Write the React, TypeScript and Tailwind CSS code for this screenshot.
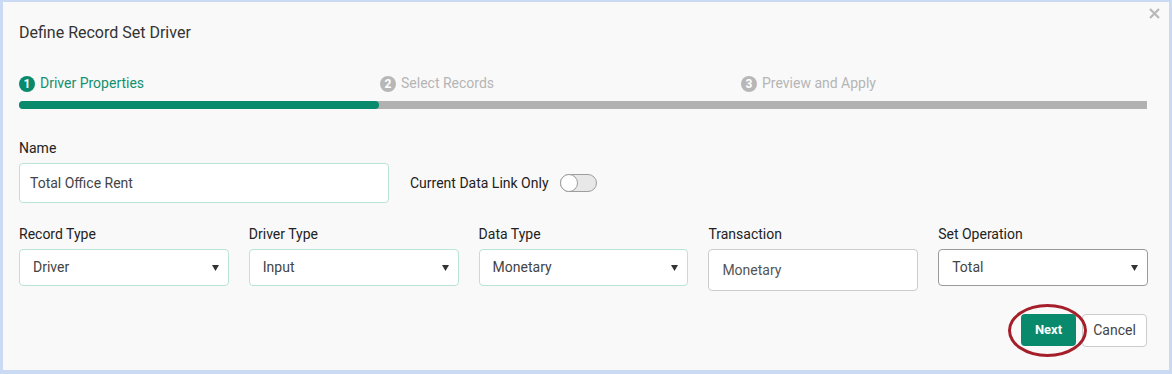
import React from "react";

const font = { fontFamily: "Roboto, 'Noto Sans', Arial, sans-serif" };

function Caret() {
  return (
    <svg width="7" height="7" viewBox="0 0 7 7" className="shrink-0">
      <path d="M0 1 L7 1 L3.5 7 Z" fill="#333" />
    </svg>
  );
}

function Select({ label, value, border }: { label: string; value: string; border: string }) {
  return (
    <div className="flex flex-col">
      <div className="text-[14px] text-[#222] leading-[16px] h-[16px]">{label}</div>
      <div
        className={`mt-[7px] h-[37px] bg-white border ${border} rounded-[4px] flex items-center justify-between pl-[13px] pr-[9px]`}
      >
        <span className="text-[14px] text-[#444]">{value}</span>
        <Caret />
      </div>
    </div>
  );
}

export default function App() {
  return (
    <div
      className="w-[1172px] h-[374px] bg-[#c9daf2] pt-[2px] pl-[3px] pr-[3px] pb-[4px]"
      style={font}
    >
      <div className="relative h-full bg-[#f9f9f9] pl-[16px] pr-[22px] pt-[22px]">
        <svg
          className="absolute right-[9px] top-[6px]"
          width="11"
          height="11"
          viewBox="0 0 11 11"
        >
          <path d="M1 1 L10 10 M10 1 L1 10" stroke="#b8b8b8" strokeWidth="2.2" />
        </svg>
        <div className="text-[16px] text-[#333] leading-[18px]">Define Record Set Driver</div>

        {/* steps */}
        <div className="mt-[31px] flex">
          <div className="w-[361px] flex items-center gap-[5px]">
            <div className="w-[16px] h-[16px] rounded-full bg-[#0a8a6c] text-white text-[12px] font-bold flex items-center justify-center">
              1
            </div>
            <span className="text-[14px] text-[#13906f]">Driver Properties</span>
          </div>
          <div className="w-[361px] flex items-center gap-[5px]">
            <div className="w-[16px] h-[16px] rounded-full bg-[#b7b7b7] text-white text-[12px] font-bold flex items-center justify-center">
              2
            </div>
            <span className="text-[14px] text-[#b5b5b5]">Select Records</span>
          </div>
          <div className="w-[361px] flex items-center gap-[5px]">
            <div className="w-[16px] h-[16px] rounded-full bg-[#b7b7b7] text-white text-[12px] font-bold flex items-center justify-center">
              3
            </div>
            <span className="text-[14px] text-[#b5b5b5]">Preview and Apply</span>
          </div>
        </div>
        <div className="mt-[7px] h-[8px] w-[1128px] bg-[#b1b1b1] rounded-r-[2px] rounded-l-full">
          <div className="h-full w-[360px] bg-[#0a8a6c] rounded-full" />
        </div>

        {/* Name row */}
        <div className="mt-[31px] text-[14px] text-[#222] leading-[16px]">Name</div>
        <div className="mt-[7px] flex items-center">
          <div className="w-[370px] h-[40px] bg-white border border-[#b9e3d7] rounded-[4px] flex items-center pl-[10px]">
            <span className="text-[14px] text-[#444]">Total Office Rent</span>
          </div>
          <span className="ml-[21px] text-[14px] text-[#222]">Current Data Link Only</span>
          <div className="ml-[11px] w-[37px] h-[18px] rounded-full bg-[#e8e8e8] border border-[#9e9e9e] relative">
            <div className="absolute left-[-1px] top-[-1px] w-[18px] h-[18px] rounded-full bg-white border border-[#9e9e9e]" />
          </div>
        </div>

        {/* second row */}
        <div className="mt-[23px] grid grid-cols-5 gap-x-[20px] w-[1129px] items-start">
          <Select label="Record Type" value="Driver" border="border-[#b9e3d7]" />
          <Select label="Driver Type" value="Input" border="border-[#b9e3d7]" />
          <Select label="Data Type" value="Monetary" border="border-[#b9e3d7]" />
          <div className="flex flex-col">
            <div className="text-[14px] text-[#222] leading-[16px] h-[16px]">Transaction</div>
            <div className="mt-[7px] h-[42px] bg-white border border-[#cccccc] rounded-[4px] flex items-center pl-[13px]">
              <span className="text-[14px] text-[#555]">Monetary</span>
            </div>
          </div>
          <Select label="Set Operation" value="Total" border="border-[#9a9a9a]" />
        </div>

        {/* buttons */}
        <div className="mt-[23px] flex justify-end gap-[6px] w-[1128px]">
          <div className="relative">
            <button className="w-[55px] h-[32px] bg-[#0a8a6c] text-white text-[13px] font-bold rounded-[4px]">
              Next
            </button>
            <div className="absolute left-[-13px] top-[-10px] w-[79px] h-[53px] rounded-[50%] border-[3px] border-[#a51f2b]" />
          </div>
          <button className="w-[65px] h-[33px] bg-white border border-[#cccccc] text-[14px] text-[#444] rounded-[4px]">
            Cancel
          </button>
        </div>
      </div>
    </div>
  );
}
